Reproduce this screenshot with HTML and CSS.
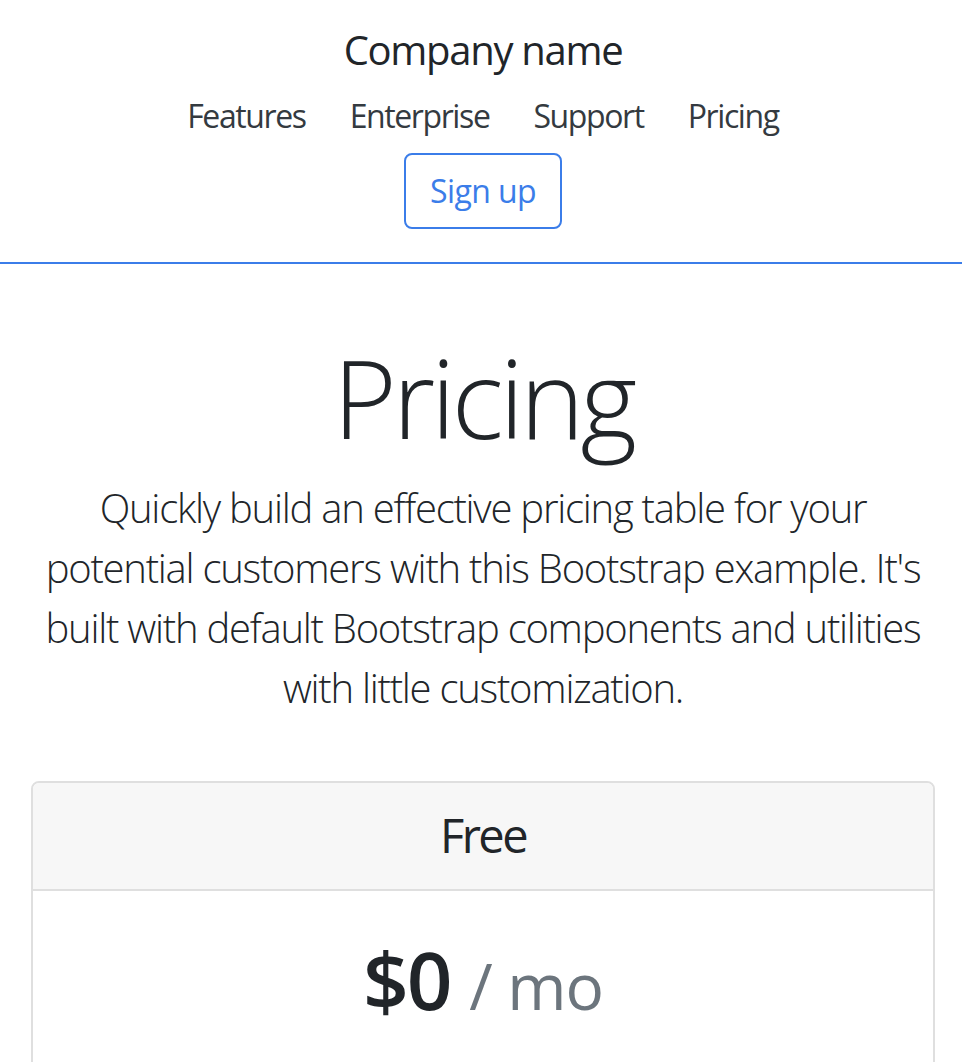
FILE: index.html
```html
<!DOCTYPE html>
<html lang="en">
<head>
<meta charset="utf-8">
<title>Pricing example</title>
<link rel="stylesheet" href="styles.css">
</head>
<body>
<header class="site-header">
  <h5 class="brand">Company name</h5>
  <nav class="nav">
    <a class="nav-link" href="#">Features</a>
    <a class="nav-link" href="#">Enterprise</a>
    <a class="nav-link" href="#">Support</a>
    <a class="nav-link" href="#">Pricing</a>
  </nav>
  <a class="btn-outline" href="#">Sign up</a>
</header>

<section class="pricing-header">
  <h1 class="display">Pricing</h1>
  <p class="lead">Quickly build an effective pricing table for your potential customers with this Bootstrap example. It's built with default Bootstrap components and utilities with little customization.</p>
</section>

<main class="container">
  <div class="card">
    <div class="card-header">
      <h4 class="plan-name">Free</h4>
    </div>
    <div class="card-body">
      <h1 class="price">$0 <small class="muted">/ mo</small></h1>
      <ul class="features">
        <li>10 users included</li>
        <li>2 GB of storage</li>
        <li>Email support</li>
        <li>Help center access</li>
      </ul>
      <a class="btn-block" href="#">Sign up for free</a>
    </div>
  </div>
</main>
</body>
</html>
```

FILE: styles.css
```css
* { box-sizing: border-box; }

body {
  margin: 0;
  font-family: "Segoe UI", "Open Sans", "Noto Sans", sans-serif;
  color: #212529;
  background: #fff;
}

.site-header {
  display: flex;
  flex-direction: column;
  align-items: center;
  padding: 26px 0 33px 4px;
  border-bottom: 2px solid #3b7de9;
}

.brand {
  margin: 0;
  font-size: 40px;
  line-height: 48px;
  font-weight: 400;
  letter-spacing: -1.3px;
  color: #212529;
}

.nav {
  display: flex;
  gap: 12px;
  margin-top: 18px;
}

.nav-link {
  padding: 0 16px;
  font-size: 32px;
  line-height: 48px;
  letter-spacing: -1.4px;
  color: #343a40;
  text-decoration: none;
}

.btn-outline {
  margin-top: 13px;
  padding: 12px 24px;
  font-size: 32px;
  line-height: 48px;
  letter-spacing: -0.6px;
  color: #3b7de9;
  border: 2px solid #3b7de9;
  border-radius: 8px;
  text-decoration: none;
}

.pricing-header {
  padding: 66px 28px 0 32px;
  text-align: center;
}

.display {
  margin: 0 0 14px;
  font-size: 109px;
  line-height: 134px;
  font-weight: 300;
  letter-spacing: -4px;
}

.lead {
  margin: 0 auto;
  max-width: 902px;
  font-size: 40px;
  line-height: 60px;
  font-weight: 300;
  letter-spacing: -1.25px;
}

.container {
  padding: 63px 27px 40px 31px;
}

.card {
  border: 2px solid #dfdfdf;
  border-radius: 8px;
  overflow: hidden;
  text-align: center;
}

.card-header {
  padding: 24px 40px;
  background: #f7f7f7;
  border-bottom: 2px solid #dfdfdf;
}

.plan-name {
  margin: 0;
  font-size: 47px;
  line-height: 57.6px;
  font-weight: 400;
  letter-spacing: -2.5px;
}

.card-body {
  padding: 40px;
}

.price {
  margin: 0 0 16px;
  font-size: 80px;
  line-height: 96px;
  font-weight: 600;
  letter-spacing: -2px;
}

.muted {
  font-size: 64px;
  font-weight: 400;
  letter-spacing: -1px;
  color: #6c757d;
}

.features {
  list-style: none;
  margin: 32px 0 48px;
  padding: 0;
  font-size: 32px;
  line-height: 48px;
}

.btn-block {
  display: block;
  padding: 16px 32px;
  font-size: 40px;
  line-height: 60px;
  color: #3b7de9;
  border: 2px solid #3b7de9;
  border-radius: 10px;
  text-decoration: none;
}
```
